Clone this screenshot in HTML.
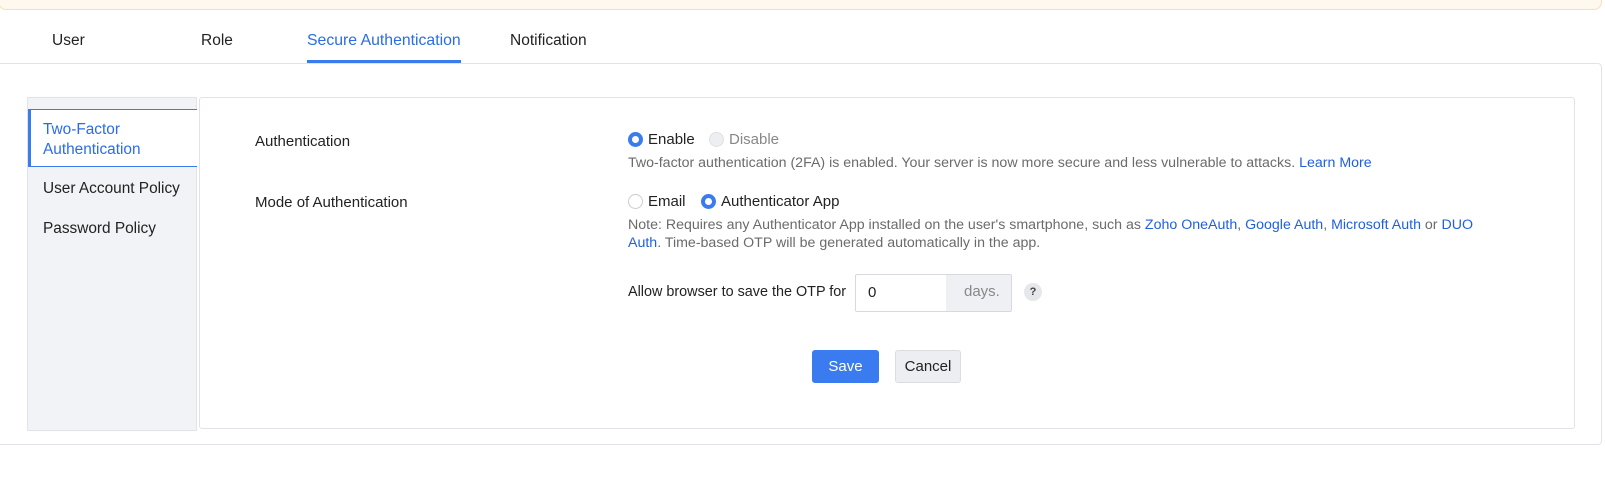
<!DOCTYPE html>
<html><head><style>
body{margin:0;width:1605px;height:488px;background:#fff;font-family:"Liberation Sans",Arial,sans-serif;font-size:15px;color:#222;position:relative;overflow:hidden}
.a{position:absolute;white-space:nowrap}
.banner{position:absolute;left:-2px;top:-10px;width:1602px;height:18px;background:#fff8ef;border:1px solid #f8dfb8;border-radius:0 0 8px 8px}
.tab{position:absolute;top:32px;font-size:15.5px;color:#222}
.outer{position:absolute;left:-2px;top:63px;width:1602px;height:380px;border:1px solid #e2e3e8;border-radius:0 4px 4px 0}
.side{position:absolute;left:27px;top:97px;width:170px;height:334px;background:#f2f3f6;border:1px solid #e2e3e8;box-sizing:border-box}
.card{position:absolute;left:199px;top:97px;width:1376px;height:332px;border:1px solid #e2e3e8;border-radius:3px;box-sizing:border-box}
.act{position:absolute;left:28px;top:109px;width:169px;height:58px;background:#fff;border:1px solid #3a7cf0;border-left:3px solid #3a7cf0;border-right:none;box-sizing:border-box}
.blue{color:#2060e0}
.gray{color:#6b6b6b;font-size:14.2px}
.r{position:absolute;width:15px;height:15px;border-radius:50%;box-sizing:border-box}
.on{background:#fff;border:4.5px solid #3a7cf0}
.off{border:1px solid #ccc;background:#fff}
.dis{border:1px solid #dfe0e4;background:#eceef2}
</style></head><body>
<div class="banner"></div>
<div class="tab" style="left:52px">User</div>
<div class="tab" style="left:201px">Role</div>
<div class="tab" style="left:307px;color:#2a6ce8;font-size:15.8px">Secure Authentication</div>
<div style="position:absolute;left:307px;top:60px;width:154px;height:3px;background:#3a7cf0"></div>
<div class="tab" style="left:510px">Notification</div>
<div class="outer"></div>
<div class="side"></div>
<div class="card"></div>
<div class="act"></div>
<div class="a" style="left:43px;top:120px;font-size:15.4px;line-height:20px;color:#2a6ce8">Two-Factor<br>Authentication</div>
<div class="a" style="left:43px;top:180px;font-size:15.4px">User Account Policy</div>
<div class="a" style="left:43px;top:220px;font-size:15.4px">Password Policy</div>
<div class="a" style="left:255px;top:133px">Authentication</div>
<div class="a" style="left:255px;top:194px">Mode of Authentication</div>
<div class="r on" style="left:628px;top:132px"></div>
<div class="a" style="left:648px;top:131px">Enable</div>
<div class="r dis" style="left:709px;top:132px"></div>
<div class="a" style="left:729px;top:131px;color:#888">Disable</div>
<div class="a gray" style="left:628px;top:155px">Two-factor authentication (2FA) is enabled. Your server is now more secure and less vulnerable to attacks. <span class="blue">Learn More</span></div>
<div class="r off" style="left:628px;top:194px"></div>
<div class="a" style="left:648px;top:193px">Email</div>
<div class="r on" style="left:701px;top:194px"></div>
<div class="a" style="left:721px;top:193px">Authenticator App</div>
<div class="a gray" style="left:628px;top:216px;line-height:18px">Note: Requires any Authenticator App installed on the user's smartphone, such as <span class="blue">Zoho OneAuth</span>, <span class="blue">Google Auth</span>, <span class="blue">Microsoft Auth</span> or <span class="blue">DUO</span><br><span class="blue">Auth</span>. Time-based OTP will be generated automatically in the app.</div>
<div class="a" style="left:628px;top:284px;font-size:14.4px">Allow browser to save the OTP for</div>
<div style="position:absolute;left:855px;top:274px;width:157px;height:38px;border:1px solid #d8d9de;border-radius:2px;box-sizing:border-box;overflow:hidden">
<div class="a" style="left:12px;top:9px">0</div>
<div style="position:absolute;left:90px;top:0;width:67px;height:38px;background:#eef0f3"></div>
<div class="a" style="left:108px;top:8px;color:#888">days.</div></div>
<div style="position:absolute;left:1024px;top:283px;width:18px;height:18px;border-radius:50%;background:#e6e7ea;font-size:11px;font-weight:bold;text-align:center;line-height:18px;color:#444">?</div>
<div style="position:absolute;left:812px;top:350px;width:67px;height:33px;background:#3a7cf0;border-radius:3px;color:#fff;text-align:center;line-height:33px">Save</div>
<div style="position:absolute;left:895px;top:350px;width:66px;height:33px;background:#eceef1;border:1px solid #dcdde1;box-sizing:border-box;border-radius:3px;text-align:center;line-height:31px">Cancel</div>
</body></html>
